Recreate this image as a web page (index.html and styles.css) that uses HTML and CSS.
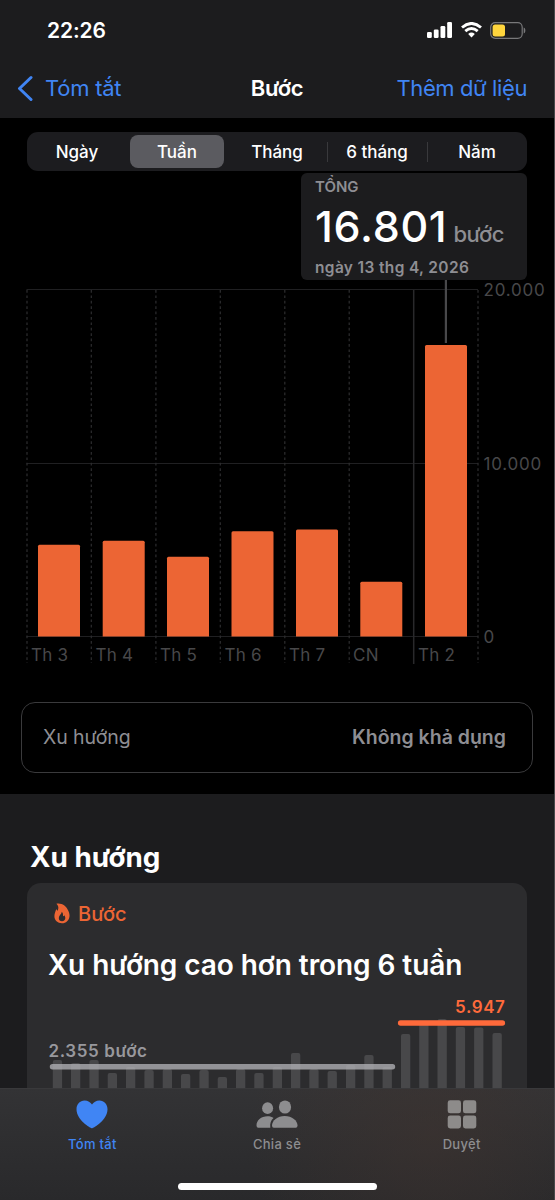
FILE: index.html
```html
<!DOCTYPE html>
<html lang="vi">
<head>
<meta charset="utf-8">
<title>Bước</title>
<link rel="stylesheet" href="styles.css">
</head>
<body>
<div class="phone">
  <header class="header">
    <div class="status">
      <span class="clock">22:26</span>
      <div class="status-icons">
        <svg width="25" height="16" viewBox="0 0 25 16" fill="#fff"><rect x="0" y="10" width="4.8" height="6" rx="1.3"/><rect x="6.8" y="7.5" width="4.8" height="8.500" rx="1.3"/><rect x="13.500" y="4" width="4.800" height="12" rx="1.300"/><rect x="20.200" y="0" width="4.800" height="16" rx="1.300"/></svg>
        <svg width="21" height="16" viewBox="0 0 21 16"><g fill="none" stroke="#fff" stroke-width="2.900"><path d="M1 5.500Q10.500-2.600 20 5.500"/><path d="M4.300 9.100Q10.500 3.900 16.700 9.100"/></g><path d="M7.200 11.900Q10.500 9.300 13.800 11.900L10.500 15.600Z" fill="#fff"/></svg>
        <svg width="36" height="17" viewBox="0 0 36 17"><rect x=".7" y=".7" width="31.500" height="15.600" rx="4.500" fill="none" stroke="#78787a" stroke-width="1.200"/><rect x="2.600" y="2.500" width="12.400" height="12" rx="2.500" fill="#ffd53d"/><path d="M33.700 5.500c2.200.6 2.200 5.400 0 6z" fill="#78787a"/></svg>
      </div>
    </div>
    <nav class="navbar">
      <a class="back"><svg width="16" height="27" viewBox="0 0 16 27" fill="none" stroke="#4085f4" stroke-width="3" stroke-linecap="round" stroke-linejoin="round"><path d="M14 2.500 2.500 13.500 14 24.500"/></svg><span class="back-label">Tóm tắt</span></a>
      <h1 class="title">Bước</h1>
      <a class="add">Thêm dữ liệu</a>
    </nav>
  </header>

  <main class="summary">
    <div class="segments">
      <span class="segment">Ngày</span>
      <span class="segment active">Tuần</span>
      <span class="segment">Tháng</span>
      <span class="segment divided">6 tháng</span>
      <span class="segment divided">Năm</span>
    </div>
    <section class="callout">
      <span class="callout-label">TỔNG</span>
      <div class="callout-value"><span class="number">16.801</span><span class="unit">bước</span></div>
      <span class="callout-date">ngày 13 thg 4, 2026</span>
    </section>
    <svg class="chart" width="554" height="394" viewBox="0 280 554 394">
      <g stroke="#202022" stroke-width="1"><path d="M26.500 289.500H478M26.500 463.500H478M26.500 636.500H478"/></g>
      <g stroke="#2d2d2f" stroke-width="1.200" stroke-dasharray="2.700 2.700"><path d="M27 290V663M91.300 290V663M155.900 290V663M220.300 290V663M284.800 290V663M349.200 290V663M478 290V663"/></g>
      <path d="M413.700 290V664" stroke="#29292b" stroke-width="1.500"/>
      <path d="M445.900 280V343" stroke="#48484a" stroke-width="2.200"/>
      <g class="bars">
        <path d="M38 636.500V546.300q0-1.500 1.500-1.500h39q1.500 0 1.500 1.500v90.200z"/>
        <path d="M102.700 636.500V542.300q0-1.500 1.500-1.500h39q1.500 0 1.500 1.500v94.200z"/>
        <path d="M167 636.500V558.300q0-1.500 1.500-1.500h39q1.500 0 1.500 1.500v78.200z"/>
        <path d="M231.500 636.500V532.800q0-1.500 1.500-1.500h39q1.500 0 1.500 1.500v103.700z"/>
        <path d="M296 636.500V531q0-1.500 1.500-1.500h39q1.500 0 1.500 1.500v105.500z"/>
        <path d="M360.300 636.500V583.300q0-1.500 1.500-1.500h39q1.500 0 1.500 1.500v53.200z"/>
        <path d="M425 636.500V346.500q0-1.500 1.500-1.500h39q1.500 0 1.500 1.500v290z"/>
      </g>
      <g class="axis-text">
        <text x="31" y="660.600">Th 3</text><text x="95.500" y="660.600">Th 4</text><text x="160" y="660.600">Th 5</text><text x="224.500" y="660.600">Th 6</text><text x="289" y="660.600">Th 7</text><text x="353" y="660.600">CN</text><text x="418" y="660.600">Th 2</text>
      </g>
      <g class="axis-text scale">
        <text x="483.500" y="296.200">20.000</text><text x="483.500" y="469.800">10.000</text><text x="483.500" y="643">0</text>
      </g>
    </svg>
    <div class="trend-row"><span class="trend-name">Xu hướng</span><span class="trend-state">Không khả dụng</span></div>
  </main>

  <section class="trends">
    <h2 class="heading">Xu hướng</h2>
    <article class="card">
      <div class="card-kind">
        <svg width="16" height="21" viewBox="0 0 16 21"><path fill="#ec6534" fill-rule="evenodd" d="M2.400.7C7.500-.4 12 2.800 13.600 6.500C15 9 15.700 10.800 15.500 13.300C15.100 17.600 12 20.300 8 20.300C3.600 20.300.4 17.300.4 13.300C.4 10.500 1.600 8.300 2.200 6.200C3 6.700 3.300 7.300 3.600 8C4.700 5.500 4.800 2.700 2.400.7ZM7.600 8.800C8.200 11 4.800 12.200 4.800 14.900C4.800 17 6.200 18.200 8 18.200C10 18.200 11.300 16.900 11.300 15C11.300 13.800 10.800 12.900 10.200 12.200C10 13 9.500 13.400 9.100 13C8.700 12 9.600 10.200 7.600 8.800Z"/></svg>
        <span class="kind-label">Bước</span>
      </div>
      <h3 class="card-title">Xu hướng cao hơn trong 6 tuần</h3>
      <svg class="trend-chart" width="500" height="100" viewBox="27 988 500 100">
        <g fill="#48484a">
          <rect x="52.800" y="1060" width="9.300" height="40" rx="2"/><rect x="71" y="1063" width="9.300" height="40" rx="2"/><rect x="89.400" y="1060" width="9.300" height="40" rx="2"/><rect x="107.700" y="1073" width="9.300" height="40" rx="2"/><rect x="126" y="1067" width="9.300" height="40" rx="2"/><rect x="144.400" y="1070" width="9.300" height="40" rx="2"/><rect x="162.700" y="1069" width="9.300" height="40" rx="2"/><rect x="181" y="1074" width="9.300" height="40" rx="2"/><rect x="199.400" y="1070" width="9.300" height="40" rx="2"/><rect x="217.700" y="1077" width="9.300" height="40" rx="2"/><rect x="236" y="1069" width="9.300" height="40" rx="2"/><rect x="254.300" y="1073" width="9.300" height="40" rx="2"/><rect x="272.700" y="1067" width="9.300" height="40" rx="2"/><rect x="291" y="1053" width="9.300" height="40" rx="2"/><rect x="309.300" y="1069" width="9.300" height="40" rx="2"/><rect x="327.600" y="1071" width="9.300" height="40" rx="2"/><rect x="346" y="1065" width="9.300" height="40" rx="2"/><rect x="364.300" y="1055" width="9.300" height="40" rx="2"/><rect x="382.600" y="1067" width="9.300" height="40" rx="2"/><rect x="401" y="1034" width="9.300" height="60" rx="2"/><rect x="419.200" y="1023" width="9.300" height="70" rx="2"/><rect x="437.500" y="1019" width="9.300" height="74" rx="2"/><rect x="455.800" y="1027" width="9.300" height="70" rx="2"/><rect x="474.100" y="1027.500" width="9.300" height="70" rx="2"/><rect x="492.500" y="1033" width="9.300" height="70" rx="2"/>
        </g>
        <path d="M52.500 1066.800H392.500" stroke="#aeaeb2" stroke-opacity=".8" stroke-width="5.400" stroke-linecap="round"/>
        <path d="M400.600 1023H502.400" stroke="#ff6a3b" stroke-width="5.400" stroke-linecap="round"/>
        <text class="average old" x="48.500" y="1056.600">2.355 bước</text>
        <text class="average new" x="455" y="1012.700">5.947</text>
      </svg>
    </article>
  </section>

  <footer class="tabbar">
    <div class="tabs">
      <a class="tab selected"><svg width="32" height="29" viewBox="0 0 32 29"><path fill="#4085f4" d="M16 28.300C14.500 28.300 .5 20 .5 9.300C.5 4.200 4 .6 8.500 .6C12 .6 14.500 2.400 16 4.600C17.500 2.400 20 .6 23.500 .6C28 .6 31.500 4.200 31.500 9.300C31.500 20 17.500 28.300 16 28.300Z"/></svg><span class="tab-label">Tóm tắt</span></a>
      <a class="tab"><svg width="42" height="29" viewBox="0 0 42 29" fill="#8d8d8f"><ellipse cx="11.600" cy="8.200" rx="5.500" ry="5.900"/><path d="M.5 25.500C.5 20.500 5 16.300 11.500 16.300C14 16.300 16 16.900 17.500 17.900C15 20 13.800 23 14.300 27.700H2.300Q.5 27.700.5 25.500Z"/><ellipse cx="29" cy="7" rx="6.100" ry="6.600"/><path d="M16 25.500C16 20.500 21.500 16 28.700 16C36 16 41.500 20.500 41.500 25.500Q41.500 27.700 39.700 27.700H17.800Q16 27.700 16 25.500Z"/></svg><span class="tab-label">Chia sẻ</span></a>
      <a class="tab"><svg width="30" height="29" viewBox="0 0 30 29" fill="#8d8b8a"><rect x=".7" y=".3" width="13.300" height="13" rx="2.400"/><rect x="16" y=".3" width="13.300" height="13" rx="2.400"/><rect x=".7" y="15.500" width="13.300" height="13" rx="2.400"/><rect x="16" y="15.500" width="13.300" height="13" rx="2.400"/></svg><span class="tab-label">Duyệt</span></a>
    </div>
    <div class="home-bar"></div>
  </footer>
</div>
</body>
</html>
```
FILE: styles.css
```css
* { box-sizing: border-box; }
body { margin: 0; background: #48484a; font-family: Inter, "Noto Sans", sans-serif; color: #fff; }
h1, h2, h3 { margin: 0; }
svg { display: block; flex: none; }
.phone { width: 554px; height: 1200px; overflow: hidden; display: flex; flex-direction: column; background: #1c1c1e; }

.header { height: 118px; flex: none; background: #1c1c1e; }
.status { height: 60px; padding: 0 28px 0 47px; display: flex; justify-content: space-between; align-items: center; }
.clock { padding-top: 2px; font-size: 21px; font-weight: 600; line-height: 30px; letter-spacing: -.1px; }
.status-icons { display: flex; align-items: center; gap: 8.500px; }
.navbar { height: 56px; padding: 0 27px; display: grid; grid-template-columns: 1fr auto 1fr; align-items: center; font-size: 22px; line-height: 30px; }
.back { display: flex; align-items: center; gap: 12px; margin-left: -10px; color: #4085f4; }
.back-label { letter-spacing: -.25px; }
.title { font-size: 22px; font-weight: 600; letter-spacing: -.3px; }
.add { justify-self: end; color: #4085f4; letter-spacing: -.4px; }

.summary { height: 676px; flex: none; background: #000; display: flex; flex-direction: column; padding-top: 14px; }
.segments { height: 39px; margin: 0 27px; padding: 3px 0; border-radius: 11px; background: #1c1c1f; display: grid; grid-template-columns: repeat(5, 1fr); flex: none; }
.segment { display: flex; align-items: center; justify-content: center; font-size: 17px; font-weight: 450; }
.active { background: #5b5b60; border-radius: 8px; margin: 0 3px; font-weight: 500; }
.divided { background: linear-gradient(#39393c, #39393c) left center / 1px 20px no-repeat; }
.callout { width: 226px; height: 107px; flex: none; align-self: flex-end; margin: 2px 27px 0 0; padding: 5px 0 0 14px; border-radius: 6px; background: #1c1c1e; color: #8e8e93; display: flex; flex-direction: column; white-space: nowrap; }
.callout-label { font-size: 15px; line-height: 18px; font-weight: 600; }
.callout-value { display: flex; align-items: baseline; gap: 6px; height: 61px; line-height: 60px; }
.number { color: #fff; font-size: 43px; font-weight: 500; letter-spacing: .7px; }
.unit { font-size: 22px; font-weight: 550; letter-spacing: -.5px; }
.callout-date { font-size: 15.500px; line-height: 22px; font-weight: 600; letter-spacing: .35px; }
.bars { fill: #ec6534; }
.axis-text { fill: #48484a; font-size: 17px; letter-spacing: .25px; }
.scale { letter-spacing: .8px; }
.trend-row { height: 71px; flex: none; margin: 28px 21px 0; padding: 0 26px 1px 21px; border: 1.500px solid #3a3a3c; border-radius: 14px; display: flex; align-items: center; justify-content: space-between; color: #8e8e93; font-size: 19.500px; }
.trend-name { letter-spacing: -.1px; }
.trend-state { font-weight: 600; }

.trends { height: 294px; flex: none; padding: 45px 27px 0; }
.heading { height: 44px; padding-left: 3px; font-size: 27.800px; line-height: 37px; font-weight: 700; }
.card { height: 205px; border-radius: 14px 14px 0 0; background: #2c2c2e; }
.card-kind { display: flex; align-items: center; gap: 8px; padding: 18px 0 0 27px; height: 43px; color: #ec6534; }
.kind-label { font-size: 20px; line-height: 26px; font-weight: 500; }
.card-title { height: 62px; padding-left: 21px; font-size: 28px; line-height: 78px; font-weight: 600; letter-spacing: -.07px; white-space: nowrap; }
.average { font-size: 17px; font-weight: 600; letter-spacing: .6px; }
.old { fill: #98989d; }
.new { fill: #ff6a3b; }

.tabbar { height: 112px; flex: none; border-top: 1px solid #39393b; background: radial-gradient(circle at 78% 40%, rgba(65, 52, 47, .5), transparent 42%), linear-gradient(#333335, #29292b); }
.tabs { display: grid; grid-template-columns: repeat(3, 184.670px); padding-top: 11px; }
.tab { display: flex; flex-direction: column; align-items: center; gap: 5px; color: #8d8d8f; }
.selected { color: #4085f4; }
.tab-label { font-size: 13px; line-height: 20px; font-weight: 500; letter-spacing: .3px; }
.home-bar { width: 199px; height: 7px; margin: 29px auto 0; border-radius: 4px; background: #fff; }
```
